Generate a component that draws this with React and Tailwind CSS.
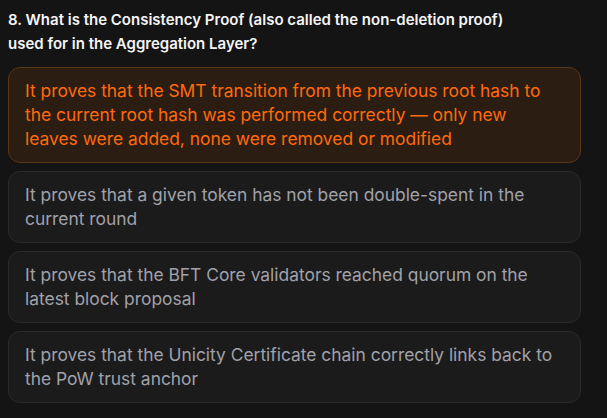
import React from 'react'

const options = [
  'It proves that the SMT transition from the previous root hash to the current root hash was performed correctly — only new leaves were added, none were removed or modified',
  'It proves that a given token has not been double-spent in the current round',
  'It proves that the BFT Core validators reached quorum on the latest block proposal',
  'It proves that the Unicity Certificate chain correctly links back to the PoW trust anchor',
]

export default function App() {
  const selected = 0
  return (
    <div className="min-h-[418px] w-[607px] bg-[#141414] px-2 pt-2 font-['Inter',sans-serif]">
      <div className="w-[573px]">
        <h3 className="mb-[11px] pr-12 text-[15px] font-semibold leading-6 text-[#f4f4f5]">
          8. What is the Consistency Proof (also called the non-deletion proof) used for in the Aggregation Layer?
        </h3>
        <div className="flex flex-col gap-2">
          {options.map((text, i) => (
            <button
              key={i}
              className={
                i === selected
                  ? 'rounded-xl border border-[#5a3516] bg-[#2b1d12] py-[11px] pl-4 pr-6 text-left text-[17.4px] leading-6 text-[#ff6a0d]'
                  : 'rounded-xl border border-[#2a2a2a] bg-[#1b1b1b] py-[11px] pl-4 pr-6 text-left text-[17.4px] leading-6 text-[#a1a1aa]'
              }
            >
              {text}
            </button>
          ))}
        </div>
      </div>
    </div>
  )
}
